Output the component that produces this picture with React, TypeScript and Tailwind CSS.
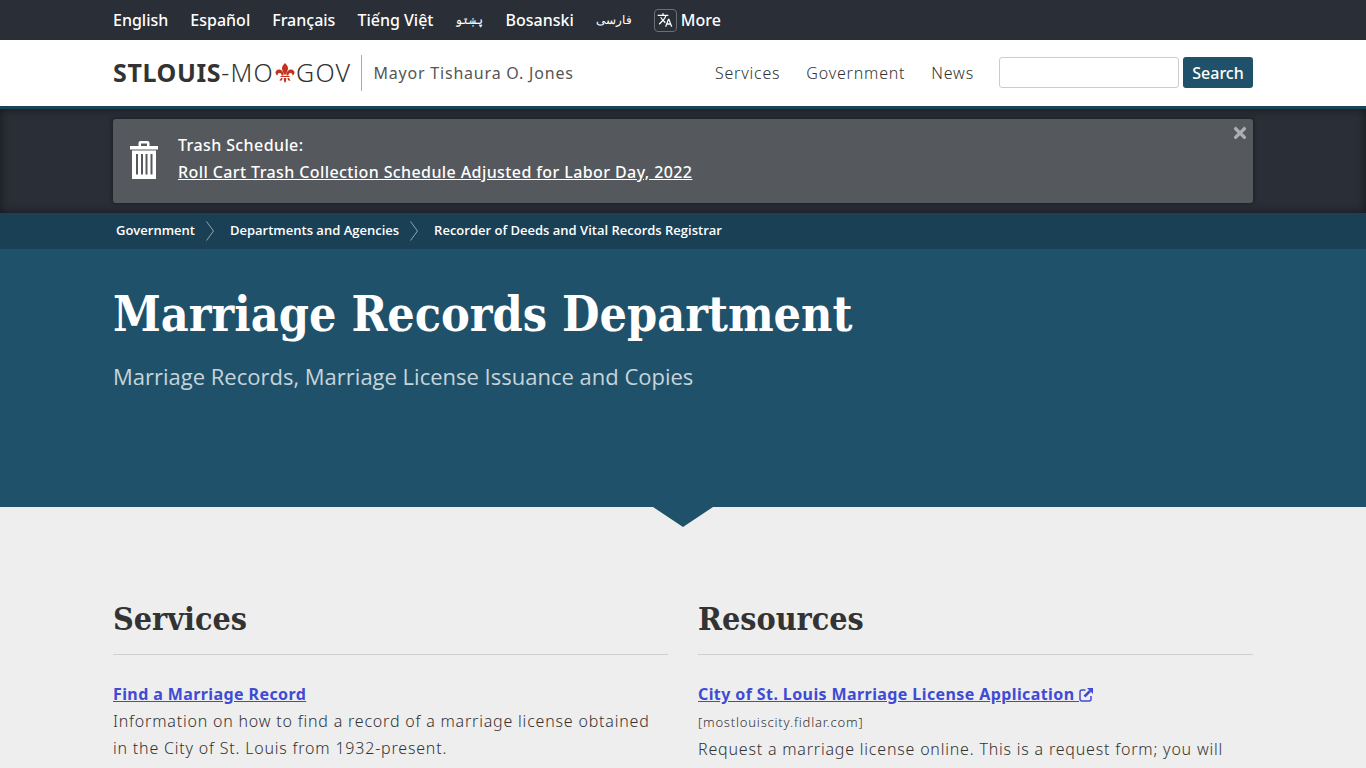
import type { ReactNode } from 'react';
import { FaTimes } from 'react-icons/fa';
import { MdTranslate } from 'react-icons/md';

const languages = [
    { label: 'English', lang: 'en' },
    { label: 'Español', lang: 'es' },
    { label: 'Français', lang: 'fr' },
    { label: 'Tiếng Việt', lang: 'vi' },
    { label: 'پښتو', lang: 'ps', small: true },
    { label: 'Bosanski', lang: 'bs' },
    { label: 'فارسی', lang: 'fa', small: true },
];

const breadcrumbs = ['Government', 'Departments and Agencies', 'Recorder of Deeds and Vital Records Registrar'];

const Container = ({ className = '', children }: { className?: string; children: ReactNode }) => (
    <div className={`mx-auto w-full max-w-[1140px] ${className}`}>{children}</div>
);

const FleurDeLis = () => (
    <svg viewBox="0 0 40 40" className="mx-px h-5 w-5" fill="#c1321f" aria-hidden="true">
        <path d="M20 0c4 4 6 7 6 11 0 4-3 7-3.500 12h-5C17 18 14 15 14 11c0-4 2-7 6-11z" />
        <path d="M17 25c0-7-3-12-9-12-4 0-7 3-7 6 0 3 2 5 4 6 0-3 1-5 4-5 4 0 4 3 4 5z" />
        <path d="M23 25c0-7 3-12 9-12 4 0 7 3 7 6 0 3-2 5-4 6 0-3-1-5-4-5-4 0-4 3-4 5z" />
        <path d="M11 26h18v2H11z" />
        <path d="M17.500 30h5c0 4 0 6-2.500 10-2.500-4-2.500-6-2.500-10z" />
        <path d="M15 30c0 4-2 6-6 5 0-2 2-2 3-5zM25 30c0 4 2 6 6 5 0-2-2-2-3-5z" />
    </svg>
);

const TrashIcon = () => (
    <svg viewBox="0 0 28 38" className="h-[38px] w-7" fill="#fff" aria-hidden="true">
        <path
            fillRule="evenodd"
            d="M0 5h8.500V2a2 2 0 0 1 2-2h7a2 2 0 0 1 2 2v3H28v3.500H0zM11 2.500V5h6V2.500zM2 9.500h24V38H2zM6 13v20.500h2V13zM11 13v20.500h2V13zM15.500 13v20.500h2V13zM20.500 13v20.500h2V13z"
        />
    </svg>
);

const ExternalIcon = () => (
    <svg viewBox="0 0 14 14" className="inline-block h-[14px] w-[14px] align-[-2px]" fill="none" stroke="currentColor" strokeWidth="1.500" aria-hidden="true">
        <path d="M6.500 2H3a2 2 0 0 0-2 2v7a2 2 0 0 0 2 2h7a2 2 0 0 0 2-2V8" />
        <path d="M5.500 8.500L11 3" strokeWidth="2.500" />
        <path d="M8 0h6v6z" fill="currentColor" stroke="none" />
    </svg>
);

const SectionTitle = ({ children }: { children: ReactNode }) => (
    <h2 className="border-b border-[#cfcfcf] pb-[11px] font-['DejaVu_Serif_Condensed','DejaVu_Serif',serif] text-[32px] leading-[48px] font-bold text-[#333]">
        {children}
    </h2>
);

const ItemLink = ({ children }: { children: ReactNode }) => (
    <h3 className="leading-7 font-bold tracking-wide">
        <a href="#" className="text-[#3f4bd3] underline">
            {children}
        </a>
    </h3>
);

export default function App() {
    return (
        <div className="min-h-screen bg-[#eee] font-['Noto_Sans','Open_Sans',sans-serif] text-base text-[#333]">
            <nav aria-label="Languages" className="bg-[#292e37] text-white">
                <Container className="flex h-10 items-center gap-[22px] font-medium">
                    {languages.map((l) => (
                        <a key={l.lang} href="#" lang={l.lang} className={l.small ? 'text-xs' : ''}>
                            {l.label}
                        </a>
                    ))}
                    <a href="#" className="flex items-center gap-1">
                        <span className="flex h-[23px] w-[23px] items-center justify-center rounded-sm border border-[#6b6f76]">
                            <MdTranslate size={16} />
                        </span>
                        More
                    </a>
                </Container>
            </nav>

            <header className="border-b-3 border-[#1b4358] bg-white">
                <Container className="flex h-[66px] items-center pb-px">
                    <a href="#" className="flex items-center text-[25px] font-light">
                        <span className="tracking-wider">
                            <b className="font-bold tracking-wide">STLOUIS</b>-MO
                        </span>
                        <FleurDeLis />
                        <span className="tracking-wider">GOV</span>
                    </a>
                    <span className="ml-[10px] flex h-9 items-center border-l border-[#aaa] pl-[11px] tracking-wider text-[#555]">Mayor Tishaura O. Jones</span>
                    <div className="ml-auto flex items-center gap-[26px] font-light tracking-wider">
                        <a href="#">Services</a>
                        <a href="#">Government</a>
                        <a href="#">News</a>
                    </div>
                    <form className="ml-[25px] flex gap-1" onSubmit={(e) => e.preventDefault()}>
                        <input type="search" aria-label="Search" className="h-[31px] w-[180px] rounded-[3px] border border-[#ccc] bg-white px-2" />
                        <button type="submit" className="h-[31px] w-[70px] rounded-[3px] bg-[#1f526a] font-medium text-white">
                            Search
                        </button>
                    </form>
                </Container>
            </header>

            <div className="bg-[#292e37] py-[10px] shadow-[inset_0_0_10px_rgba(0,0,0,0.5)]">
                <Container className="flex h-[84px] items-start rounded-[3px] bg-[#55595d] text-white shadow-[0_0_4px_rgba(0,0,0,0.5)]">
                    <div className="mt-[22px] ml-[17px]">
                        <TrashIcon />
                    </div>
                    <div className="mt-[13px] ml-5 leading-[27px] font-medium tracking-wide">
                        <p>Trash Schedule:</p>
                        <a href="#" className="underline">
                            Roll Cart Trash Collection Schedule Adjusted for Labor Day, 2022
                        </a>
                    </div>
                    <button type="button" aria-label="Close" className="mt-[5px] mr-1 ml-auto text-[#adb0b2]">
                        <FaTimes size={18} />
                    </button>
                </Container>
            </div>

            <nav aria-label="Breadcrumb" className="bg-[#1a4055] text-white">
                <Container className="flex h-9 items-center pl-[3px] font-['Open_Sans',sans-serif] text-[13px] font-semibold">
                    {breadcrumbs.map((crumb, i) => (
                        <div key={crumb} className="flex items-center">
                            {i > 0 && (
                                <svg viewBox="0 0 8 20" className="mr-4 ml-[11px] h-5 w-2" fill="none" stroke="#8fa5b0" aria-hidden="true">
                                    <path d="M.5 .5l7 9.500-7 9.500" />
                                </svg>
                            )}
                            <a href="#">{crumb}</a>
                        </div>
                    ))}
                </Container>
            </nav>

            <section className="bg-[#1f526a] text-white">
                <Container className="h-[258px] pt-8">
                    <h1 className="font-['DejaVu_Serif_Condensed','DejaVu_Serif',serif] text-5xl leading-[66px] font-bold">Marriage Records Department</h1>
                    <p className="mt-[11px] font-['Open_Sans',sans-serif] text-[22px] leading-9 text-[#c7d4da]">
                        Marriage Records, Marriage License Issuance and Copies
                    </p>
                </Container>
            </section>
            <svg viewBox="0 0 60 20" className="mx-auto block h-5 w-[60px]" fill="#1f526a" aria-hidden="true">
                <path d="M0 0h60L30 20z" />
            </svg>

            <main>
                <Container className="grid grid-cols-2 gap-[30px] pt-[68px]">
                    <section>
                        <SectionTitle>Services</SectionTitle>
                        <div className="mt-[25px] leading-[27px] font-light tracking-wider">
                            <ItemLink>Find a Marriage Record</ItemLink>
                            <p>Information on how to find a record of a marriage license obtained in the City of St. Louis from 1932-present.</p>
                        </div>
                    </section>
                    <section>
                        <SectionTitle>Resources</SectionTitle>
                        <div className="mt-[25px] leading-[27px] font-light tracking-wider">
                            <ItemLink>
                                City of St. Louis Marriage License Application <ExternalIcon />
                            </ItemLink>
                            <p className="text-[13px] leading-7">[mostlouiscity.fidlar.com]</p>
                            <p>Request a marriage license online. This is a request form; you will</p>
                        </div>
                    </section>
                </Container>
            </main>
        </div>
    );
}
